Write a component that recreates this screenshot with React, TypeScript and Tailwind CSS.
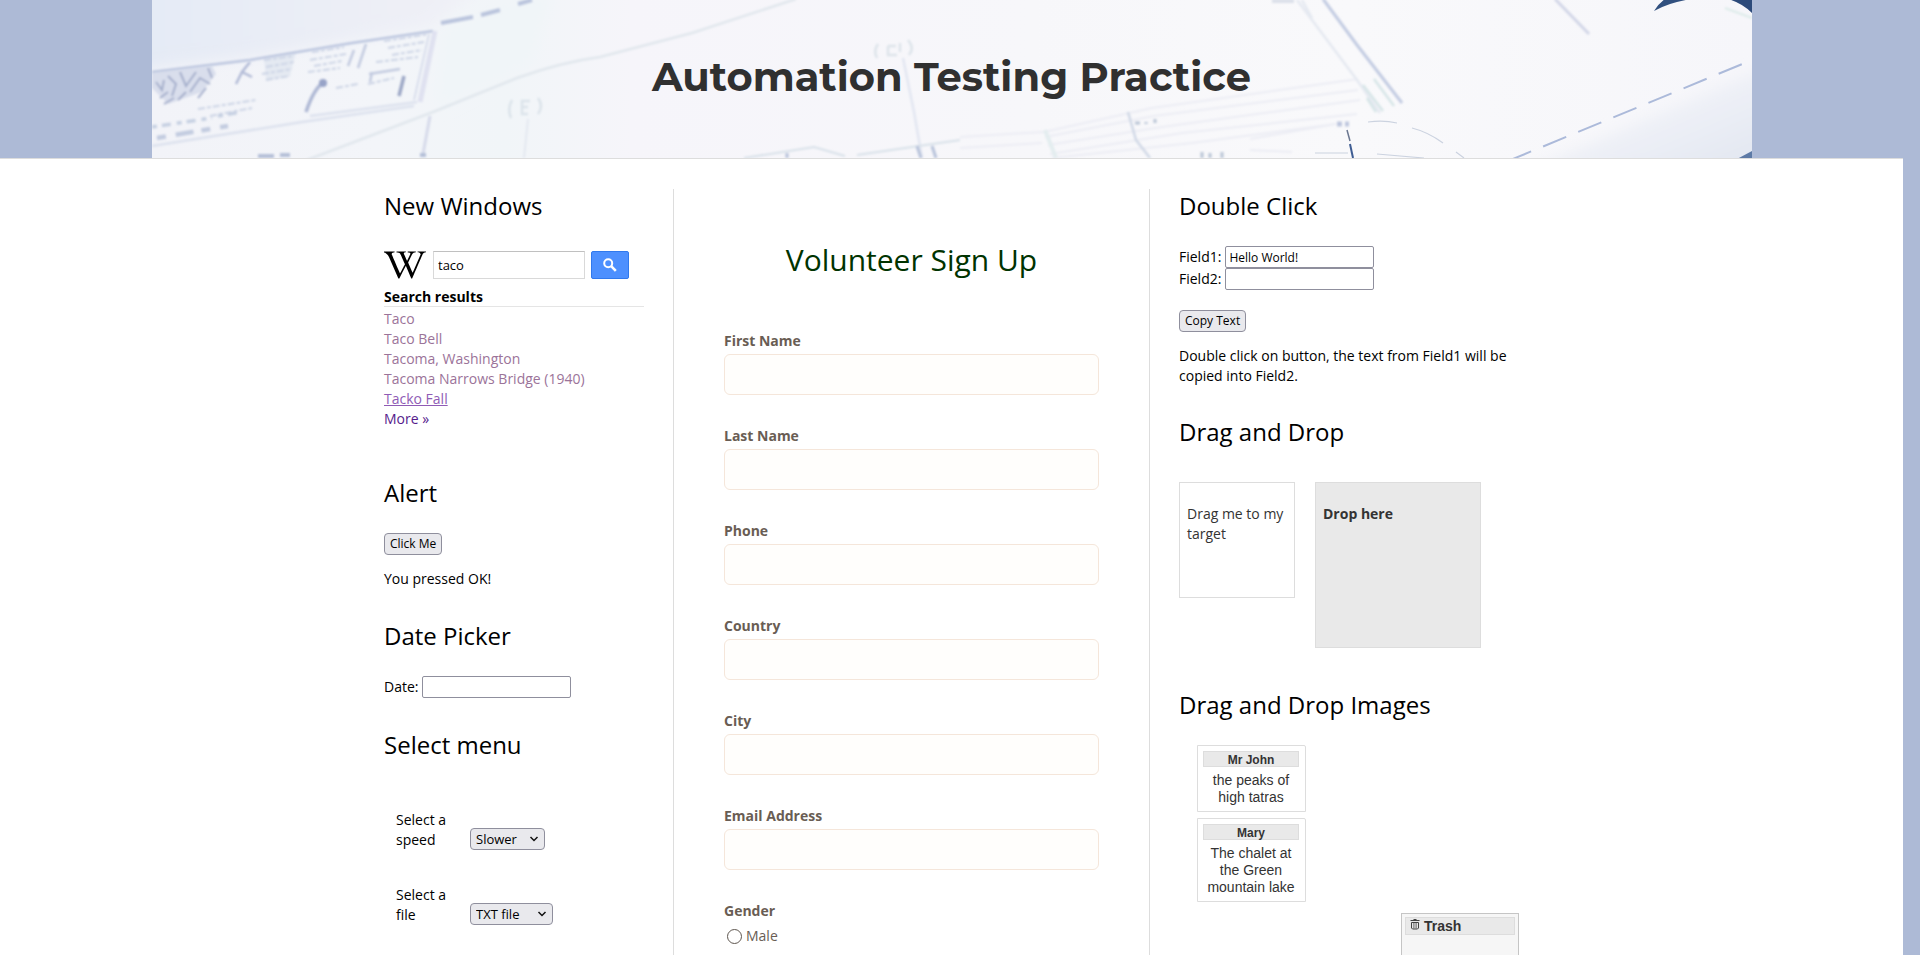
import React from "react";
import { FaWikipediaW } from "react-icons/fa";

const inputClass = "h-[22px] w-[149px] rounded-xs border border-[#8f8f9d] px-[3px] text-xs text-black";
const buttonClass =
  "block h-[22px] rounded border border-[#8f8f9d] bg-[#e9e9ed] px-[5px] text-xs leading-5 text-black";

function Blueprint() {
  return (
    <svg
      className="absolute inset-0 h-full w-full"
      viewBox="0 0 1600 158"
      preserveAspectRatio="xMidYMid slice"
      fill="none"
      aria-hidden="true"
    >
      <defs>
        <linearGradient id="paper" x1="0" y1="0" x2="1" y2="0">
          <stop offset="0" stopColor="#f2f3f8" />
          <stop offset="0.14" stopColor="#f3f5f9" />
          <stop offset="0.22" stopColor="#f1f5f8" />
          <stop offset="0.3" stopColor="#f6f5fa" />
          <stop offset="0.55" stopColor="#f7f7fa" />
          <stop offset="0.75" stopColor="#f9f9fb" />
          <stop offset="1" stopColor="#f6f6fa" />
        </linearGradient>
        <linearGradient id="corner" x1="0" y1="0" x2="1" y2="1">
          <stop offset="0.3" stopColor="#f5f6fa" />
          <stop offset="1" stopColor="#e0e5f0" />
        </linearGradient>
        <linearGradient id="sheet" x1="0" y1="0" x2="1" y2="0">
          <stop offset="0" stopColor="#e4eaf5" />
          <stop offset="1" stopColor="#f1f1f7" />
        </linearGradient>
        <filter id="soft" x="-5%" y="-5%" width="110%" height="110%">
          <feGaussianBlur stdDeviation="0.9" />
        </filter>
        <filter id="blurred" x="-5%" y="-15%" width="110%" height="130%">
          <feGaussianBlur stdDeviation="1.3" />
        </filter>
        <filter id="wash" x="-15%" y="-25%" width="130%" height="150%">
          <feGaussianBlur stdDeviation="7" />
        </filter>
      </defs>
      <rect width="1600" height="158" fill="url(#paper)" />
      <path d="M-20 -20H340L280 26L100 56L-20 70Z" fill="url(#sheet)" filter="url(#wash)" />
      <path d="M292 30L400 -10L380 60L285 108Z" fill="#f0f5f8" filter="url(#wash)" />
      <path d="M1375 170L1620 65V170Z" fill="url(#corner)" filter="url(#wash)" />

      <g filter="url(#blurred)">
        <path d="M0 73L60 66L64 74L50 92L16 104L0 88Z" fill="#d9deec" />
        <path
          d="M4 82L10 90L12 80M16 76L24 84L20 96M28 72L34 86L44 72M38 92L48 78L58 84M46 98L54 88M26 100L34 92M8 98L16 92M56 68L60 78M12 104L22 98"
          stroke="#a3adcb"
          strokeWidth="2"
        />
        <path d="M98 62L90 72L84 84M90 72L100 77" stroke="#b1bad6" strokeWidth="2.5" />
        <path d="M112 58L144 52L138 76L114 81Z" fill="#e4e9f2" />
        <g stroke="#ccd4e5" strokeWidth="2" strokeDasharray="7 2 4 2">
          <path d="M112 60L142 56M114 67L142 62M110 74L140 69M114 80L138 76" />
          <path d="M160 52L192 47M158 60L194 54M162 66L190 61M156 72L188 68" />
          <path d="M232 41L276 34M236 48L272 42M240 55L270 50M224 62L266 57" />
          <path d="M46 109L104 100M58 116L100 108M184 88L206 84M216 84L242 78" />
        </g>
        <path d="M214 44L206 68M202 50L196 66M217 74L248 69M220 72L218 82" stroke="#c3cbe0" strokeWidth="2.5" />
        <path d="M0 127L60 118M66 116L90 112" stroke="#c6d0e2" strokeWidth="3.5" strokeDasharray="5 5 9 6" />
        <path d="M5 138L76 126" stroke="#c3cce0" strokeWidth="4.5" strokeDasharray="9 10 18 8" />
      </g>

      <g filter="url(#soft)">
        <path d="M0 72L98 60L200 43L281 31" stroke="#bcc6df" strokeWidth="2.5" />
        <path d="M283 31L268 102" stroke="#dfe1f0" strokeWidth="5" />
        <path d="M277 34L262 100" stroke="#d2d8e9" strokeWidth="1.5" />
        <path d="M158 116L265 102M0 146L150 122L262 106" stroke="#dde2ee" strokeWidth="2.5" />
        <path d="M172 82Q162 88 154 112" stroke="#aeb8d4" strokeWidth="3.5" />
        <circle cx="171" cy="83" r="4" fill="#97a3c7" />
        <path d="M252 76L247 96" stroke="#9ca7c6" strokeWidth="3.5" />
        <path d="M289 23L321 17M329 15L348 10M366 4L380 0" stroke="#bac4dd" strokeWidth="4" />
        <path d="M155 160L281 112L365 78Q410 62 448 57L540 33L644 -1" stroke="#e1e7ed" strokeWidth="2.5" />
        <path d="M278 116L271 154" stroke="#d6daea" strokeWidth="3" />
        <path d="M268 155H274M106 156H122M128 155H138" stroke="#b5c0d8" strokeWidth="4" />
        <path
          d="M360 100Q355 109 359 118M386 98Q392 106 386 114M378 101H370V114H376M370 107H376"
          stroke="#dbe3ea"
          strokeWidth="2.5"
        />
        <path d="M376 119L372 158" stroke="#e3e8f0" strokeWidth="2" />
        <path
          d="M726 44Q721 51 725 58M756 40Q763 48 757 55M736 46H744M736 46V55H745M748 43V52"
          stroke="#dde4ea"
          strokeWidth="2.5"
        />
        <path d="M751 58L762 112L770 158" stroke="#e2e6f1" strokeWidth="2.5" />
        <path d="M592 158L662 147L693 156M705 155L808 140" stroke="#d8e1e9" strokeWidth="2" />
        <path d="M635 153V158M765 146L769 158M780 146L784 158" stroke="#b7c2da" strokeWidth="3" />
        <g stroke="#ecedf4" strokeWidth="2">
          <path d="M808 137L892 132L1000 108L1206 79M893 137L1002 116L1206 90M896 145L1010 127L1208 100M898 154L1030 133L1205 114M808 148L890 143" />
          <path d="M900 158L1040 143L1184 124M1098 139L1184 124M1098 150L1140 152" />
        </g>
        <path d="M893 130L904 158" stroke="#e3edef" strokeWidth="4" />
        <path d="M976 112L984 140L998 158" stroke="#d0d8e6" strokeWidth="2.5" />
        <path d="M983 123H988M994 122V124M1003 119V123M1050 152V158M1058 153V158M1070 152V158" stroke="#b9c5d6" strokeWidth="3" />
        <path d="M1171 -1L1205 45L1250 103" stroke="#c3cce2" strokeWidth="3" />
        <path d="M1145 0L1205 80L1228 113M1150 0L1160 18" stroke="#e5e9f1" strokeWidth="2.5" />
        <path d="M1222 79L1242 106M1211 85L1231 111M1215 98L1224 112" stroke="#d6e5e7" strokeWidth="2.5" />
        <path d="M1403 -1L1437 34" stroke="#d2d6e7" strokeWidth="3" />
        <path d="M1120 1H1142" stroke="#dbe0ea" strokeWidth="4" />
        <path d="M1185 124H1190M1193 124H1197" stroke="#bec6de" strokeWidth="5" />
        <path d="M1573 8L1600 18" stroke="#dcebe9" strokeWidth="2" />
      </g>

      <path d="M1195 130L1198 141" stroke="#6b7790" strokeWidth="1.5" />
      <path d="M1198 144L1201 158" stroke="#3f5d93" strokeWidth="2" />
      <path
        d="M1216 122Q1232 120 1245 123M1260 128Q1276 132 1291 143M1304 152L1312 158M1163 153H1196M1225 154L1272 158"
        stroke="#ccd3e0"
        strokeWidth="1.2"
      />
      <path d="M1356 161L1600 60" stroke="#acbada" strokeWidth="2" strokeDasharray="25 13" />
      <path d="M1502 11Q1506 4 1513 -1H1540Q1518 2 1502 11Z" fill="#31507f" />
      <path d="M1576 -1Q1590 3 1600 13V-1Z" fill="#2c4a7a" />
      <path d="M1585 159L1600 151V159Z" fill="#5d7aa6" />
    </svg>
  );
}

function Section({ title, children }: { title: string; children: React.ReactNode }) {
  return (
    <section>
      <h2 className="text-2xl leading-[34px]">{title}</h2>
      {children}
    </section>
  );
}

function SelectRow({ id, label, options, width }: { id: string; label: string; options: string[]; width: string }) {
  return (
    <div className="flex items-end gap-3.5">
      <label htmlFor={id} className="w-[60px]">
        {label}
      </label>
      <div className="relative">
        <select
          id={id}
          className={`${width} block h-[22px] appearance-none rounded border border-[#8f8f9d] bg-[#e9e9ed] px-[5px] text-[13px] leading-5 text-black`}
        >
          {options.map((o) => (
            <option key={o}>{o}</option>
          ))}
        </select>
        <svg className="pointer-events-none absolute top-2 right-1.5 h-1.5 w-2.5" viewBox="0 0 10 6" fill="none">
          <path d="M1.5 1L5 4.5L8.5 1" stroke="#111" strokeWidth="1.5" />
        </svg>
      </div>
    </div>
  );
}

const results = ["Taco", "Taco Bell", "Tacoma, Washington", "Tacoma Narrows Bridge (1940)"];

function LeftColumn() {
  return (
    <div className="flex flex-col gap-[30px] border-r border-[#ddd] pr-[29px]">
      <Section title="New Windows">
        <form className="mt-7 flex h-7 items-center" onSubmit={(e) => e.preventDefault()}>
          <FaWikipediaW className="mr-[7px] h-[34px] w-[42px] text-black" />
          <input
            aria-label="Search Wikipedia"
            defaultValue="taco"
            className="h-7 w-[152px] border border-[#d9d9d9] border-t-[#c0c0c0] px-1 text-[13px] text-black"
          />
          <button
            type="submit"
            aria-label="Search"
            className="ml-1.5 flex h-7 w-[38px] items-center justify-center rounded-xs border border-[#3079ed] bg-[#4d90fe]"
          >
            <svg className="h-3.5 w-3.5" viewBox="0 0 14 14" fill="none" stroke="#fff">
              <circle cx="5.2" cy="5.2" r="4" strokeWidth="2" />
              <path d="M8.2 8.2L12.8 12.8" strokeWidth="2.6" />
            </svg>
          </button>
        </form>
        <h3 className="mt-[9px] border-b border-[#e5e5e5] leading-[18px] font-bold">Search results</h3>
        <ul className="mt-0.5 mb-[17px] text-[#9b7399]">
          {results.map((r) => (
            <li key={r}>
              <a href="#results">{r}</a>
            </li>
          ))}
          <li>
            <a href="#results" className="text-[#8f5bb5] underline">
              Tacko Fall
            </a>
          </li>
          <li>
            <a href="#more" className="text-[#551a8b]">
              More »
            </a>
          </li>
        </ul>
      </Section>

      <Section title="Alert">
        <button className={`${buttonClass} mt-[23px]`}>Click Me</button>
        <p className="mt-3.5">You pressed OK!</p>
      </Section>

      <Section title="Date Picker">
        <div className="mt-[23px] flex items-center gap-1">
          <label htmlFor="date">Date:</label>
          <input id="date" className={inputClass} />
        </div>
      </Section>

      <Section title="Select menu">
        <div className="mt-12 flex flex-col gap-[35px] pl-3">
          <SelectRow id="speed" label="Select a speed" options={["Slower", "Slow", "Fast"]} width="w-[75px]" />
          <SelectRow id="file" label="Select a file" options={["TXT file", "PDF file"]} width="w-[83px]" />
        </div>
      </Section>
    </div>
  );
}

const fields = ["First Name", "Last Name", "Phone", "Country", "City", "Email Address"];

function SignUp() {
  return (
    <form className="border-r border-[#ddd] px-[50px] pt-[51px] text-[#695d54]">
      <h2 className="text-center text-3xl leading-10 text-[#003300]">Volunteer Sign Up</h2>
      <div className="mt-[51px] flex flex-col gap-[31px]">
        {fields.map((f) => (
          <label key={f} className="flex flex-col gap-[3px] font-bold">
            {f}
            <input className="h-[41px] w-full rounded-md border border-[#f5e6da] bg-[#fffefc] px-2 font-normal" />
          </label>
        ))}
        <fieldset>
          <legend className="font-bold">Gender</legend>
          <label className="mt-[5px] flex items-center gap-1 pl-[3px]">
            <input
              type="radio"
              name="gender"
              className="h-[15px] w-[15px] appearance-none rounded-full border border-[#5e564f] bg-white checked:border-4"
            />
            Male
          </label>
        </fieldset>
      </div>
    </form>
  );
}

function Card({ name, text }: { name: string; text: string }) {
  return (
    <li className="w-[109px] rounded-tr-xs border border-[#ddd] py-[5px] pr-1.5 pl-[5px] text-center font-['Liberation_Sans',sans-serif] leading-[17px] text-[#333]">
      <h5 className="h-4 border border-[#ddd] bg-[#e9e9e9] text-xs leading-4 font-bold">{name}</h5>
      <p className="mt-[5px]">{text}</p>
    </li>
  );
}

function RightColumn() {
  return (
    <div className="pl-[29px]">
      <Section title="Double Click">
        <div className="mt-[23px]">
          <div className="flex items-center gap-1">
            <label htmlFor="field1">Field1:</label>
            <input id="field1" defaultValue="Hello World!" className={inputClass} />
          </div>
          <div className="flex items-center gap-1">
            <label htmlFor="field2">Field2:</label>
            <input id="field2" className={inputClass} />
          </div>
        </div>
        <button className={`${buttonClass} mt-5`}>Copy Text</button>
        <p className="mt-3.5 mb-[29px]">Double click on button, the text from Field1 will be copied into Field2.</p>
      </Section>

      <Section title="Drag and Drop">
        <div className="mt-[33px] mb-10 flex items-start gap-5 text-[#333]">
          <div className="h-[116px] w-[116px] border border-[#ddd] px-[7px] pt-[21px]">
            <p>Drag me to my target</p>
          </div>
          <div className="h-[166px] w-[166px] border border-[#ddd] bg-[#e9e9e9] px-[7px] pt-[21px]">
            <p className="font-bold">Drop here</p>
          </div>
        </div>
      </Section>

      <Section title="Drag and Drop Images">
        <ul className="mt-[23px] ml-[18px] flex flex-col gap-1.5">
          <Card name="Mr John" text="the peaks of high tatras" />
          <Card name="Mary" text="The chalet at the Green mountain lake" />
        </ul>
        <div className="mt-[11px] ml-auto h-52 w-[118px] border border-[#c5c5c5] bg-[#f6f6f6] p-[3px]">
          <h4 className="flex items-center gap-1 border border-[#ddd] bg-[#e9e9e9] pl-1 font-['Liberation_Sans',sans-serif] leading-4 font-bold text-[#333]">
            <svg className="mb-1 h-[11px] w-[10px]" viewBox="0 0 10 11" fill="none" stroke="#444">
              <path d="M0.5 1.5H9.5M3.5 0.5H6.5" strokeWidth="1" />
              <path d="M1.5 3.5H8.5V9L7.5 10H2.5L1.5 9Z" strokeWidth="1" />
              <path d="M3.9 3.5V9.5M6.1 3.5V9.5" strokeWidth="0.8" />
            </svg>
            Trash
          </h4>
        </div>
      </Section>
    </div>
  );
}

export default function App() {
  return (
    <div className="h-screen overflow-hidden bg-[#adbad6] pr-[17px] font-['Open_Sans','Noto_Sans',sans-serif] text-sm leading-5 text-black">
      <header className="border-b border-[#ddd]">
        <div className="relative mx-auto flex h-[158px] max-w-[1600px] items-center justify-center pb-1">
          <Blueprint />
          <h1 className="relative font-['Montserrat','Inter',sans-serif] text-[40px] leading-[48px] font-bold text-[#303030]">
            Automation Testing Practice
          </h1>
        </div>
      </header>
      <main className="bg-white pt-[30px]">
        <div className="mx-auto grid max-w-[1135px] grid-cols-[290px_476px_minmax(0,1fr)]">
          <LeftColumn />
          <SignUp />
          <RightColumn />
        </div>
      </main>
    </div>
  );
}
